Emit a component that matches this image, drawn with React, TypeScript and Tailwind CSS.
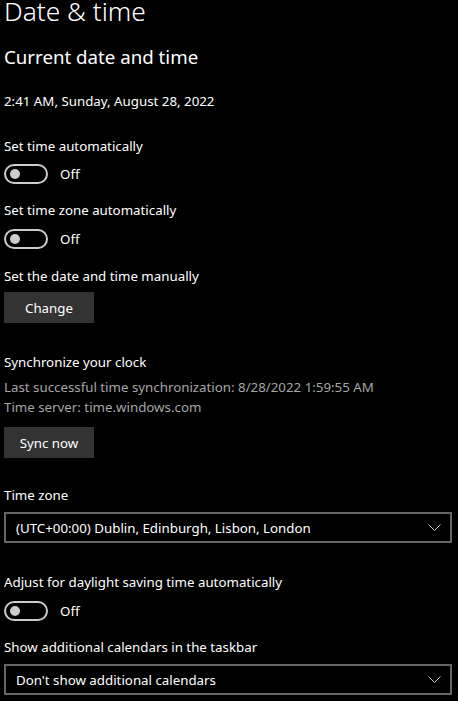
const Chevron = () => {
  return (
    <svg width="13" height="7" viewBox="0 0 13 7" fill="none" className="text-[#cccccc]">
      <polyline points="0.5,0.5 6.5,6.5 12.5,0.5" stroke="currentColor" strokeWidth="1" />
    </svg>
  );
};

const Toggle = ({ className }: { className: string }) => {
  return (
    <div className={`flex items-center ${className}`}>
      <div className="flex h-5 w-11 items-center rounded-full border-2 border-[#cccccc] pl-[4px]">
        <div className="h-[10px] w-[10px] rounded-full bg-[#cccccc]"></div>
      </div>
      <span className="ml-3 leading-5">Off</span>
    </div>
  );
};

const Select = ({ label, className }: { label: string; className: string }) => {
  return (
    <div
      className={`flex h-[31px] w-[448px] items-center justify-between border-2 border-[#666666] pl-[10px] pr-[9px] ${className}`}
    >
      <span className="leading-5">{label}</span>
      <Chevron />
    </div>
  );
};

const Button = ({ label, className }: { label: string; className: string }) => {
  return (
    <div
      className={`flex h-[31px] w-[90px] items-center justify-center bg-[#333333] leading-5 ${className}`}
    >
      {label}
    </div>
  );
};

const App = () => {
  return (
    <div
      className="flex min-h-[701px] w-[458px] flex-col overflow-hidden bg-black px-1 text-[13.3px] text-white"
      style={{ fontFamily: '"Noto Sans", "Open Sans", sans-serif' }}
    >
      <h1 className="text-[26.3px] font-light leading-[22px]">Date &amp; time</h1>
      <h2 className="mt-[21px] text-[18.7px] leading-[28px]">Current date and time</h2>
      <p className="mt-[20px] leading-5">2:41 AM, Sunday, August 28, 2022</p>

      <p className="mt-[25px] leading-5">Set time automatically</p>
      <Toggle className="mt-[8px]" />

      <p className="mt-[16px] leading-5">Set time zone automatically</p>
      <Toggle className="mt-[9px]" />

      <p className="mt-[17px] leading-5">Set the date and time manually</p>
      <Button label="Change" className="mt-[6px]" />

      <p className="mt-[29px] leading-5">Synchronize your clock</p>
      <div className="mt-[5px] leading-5 text-[#a6a6a6]">
        <p>Last successful time synchronization: 8/28/2022 1:59:55 AM</p>
        <p>Time server: time.windows.com</p>
      </div>
      <Button label="Sync now" className="mt-[10px]" />

      <p className="mt-[27px] leading-5">Time zone</p>
      <Select label="(UTC+00:00) Dublin, Edinburgh, Lisbon, London" className="mt-[7px]" />

      <p className="mt-[29px] leading-5">Adjust for daylight saving time automatically</p>
      <Toggle className="mt-[9px]" />

      <p className="mt-[16px] leading-5">Show additional calendars in the taskbar</p>
      <Select label="Don't show additional calendars" className="mt-[7px]" />
    </div>
  );
};

export default App;
